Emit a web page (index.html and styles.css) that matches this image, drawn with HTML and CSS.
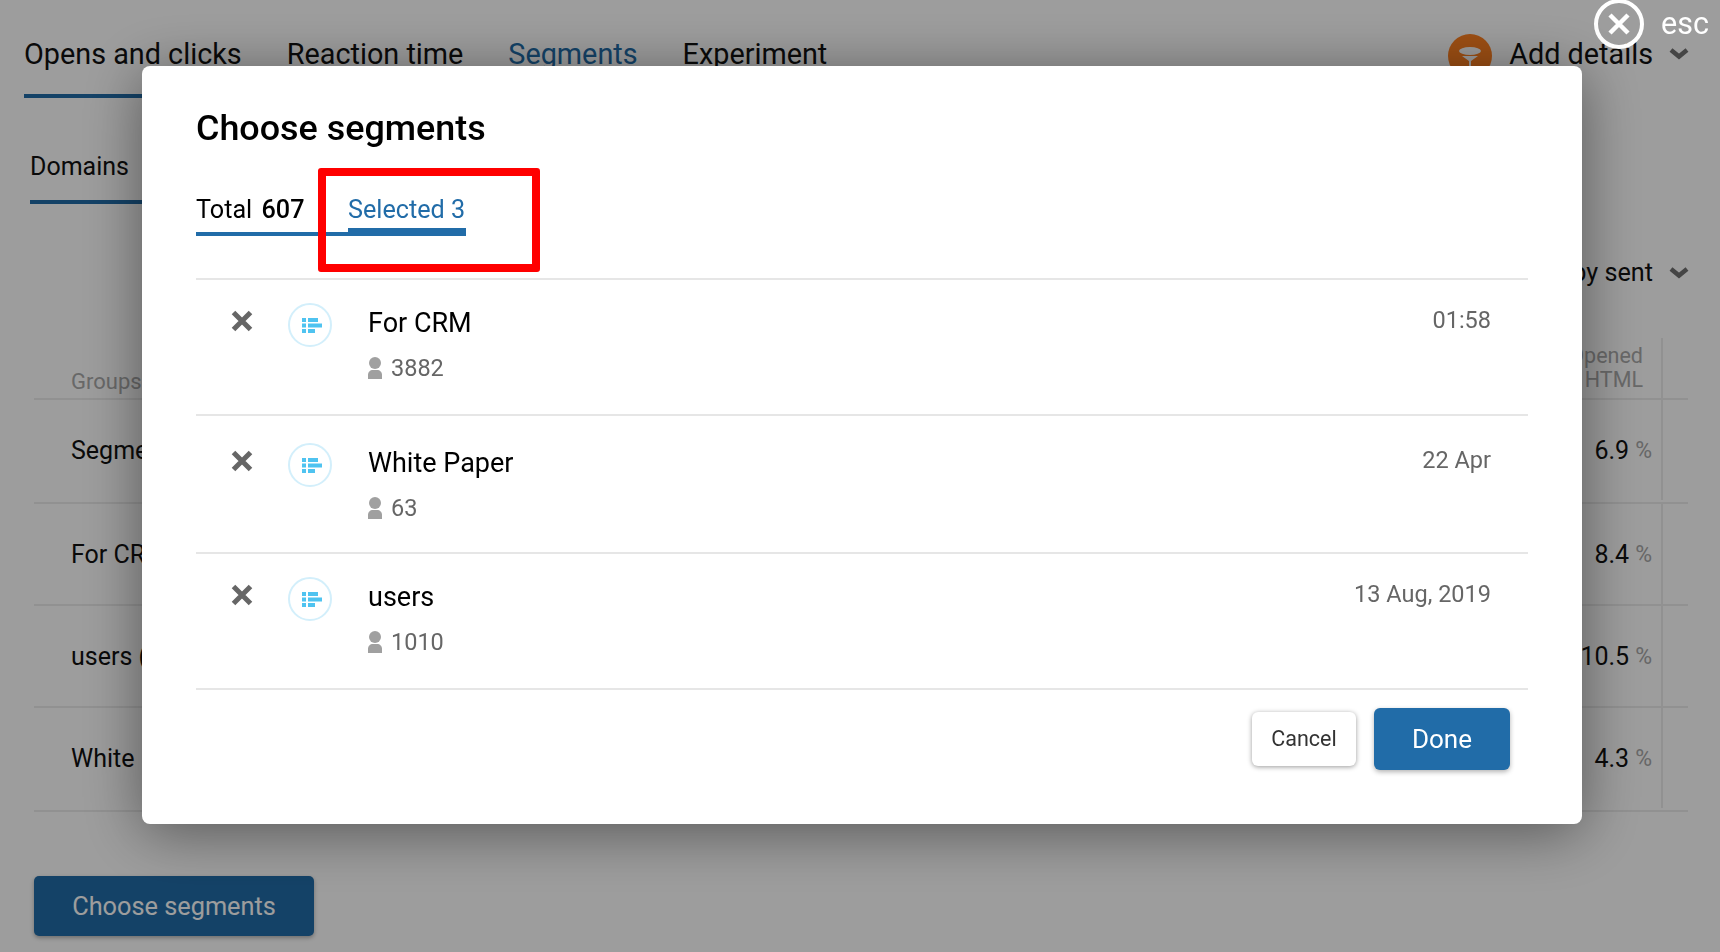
FILE: index.html
```html
<!DOCTYPE html>
<html lang="en">
<head>
<meta charset="utf-8">
<title>Choose segments</title>
<link rel="stylesheet" href="styles.css">
</head>
<body>
<div class="page">
  <header class="main-tabs">
    <a class="main-tab main-tab--on">Opens and clicks</a>
    <a class="main-tab">Reaction time</a>
    <a class="main-tab main-tab--blue">Segments</a>
    <a class="main-tab">Experiment</a>
    <div class="account">
      <span class="avatar">
        <svg width="24" height="26" viewBox="0 0 24 26"><ellipse cx="12" cy="4" rx="11" ry="4" fill="#fff"/><path d="M4 9h16l-7 5V26h-2V14z" fill="#fff"/></svg>
      </span>
      <span class="account-name">Add details</span>
      <svg class="chevron" width="20" height="12" viewBox="0 0 20 12"><path d="M2 2l8 6.500L18 2" fill="none" stroke="#707070" stroke-width="4.500"/></svg>
    </div>
  </header>
  <nav class="sub-tabs"><a class="sub-tab">Domains</a></nav>
  <div class="sort">
    <span>Sort by sent</span>
    <svg class="chevron" width="20" height="12" viewBox="0 0 20 12"><path d="M2 2l8 6.500L18 2" fill="none" stroke="#707070" stroke-width="4.500"/></svg>
  </div>
  <section class="table">
    <div class="tr tr--head">
      <div class="td-name">Groups</div>
      <div class="td-val td-val--head">Opened<br>HTML</div>
    </div>
    <div class="tr tr--a"><div class="td-name">Segments</div><div class="td-val">6.9 <small>%</small></div></div>
    <div class="tr tr--b"><div class="td-name">For CRM</div><div class="td-val">8.4 <small>%</small></div></div>
    <div class="tr tr--b"><div class="td-name">users (</div><div class="td-val">10.5 <small>%</small></div></div>
    <div class="tr tr--a"><div class="td-name">White Paper</div><div class="td-val">4.3 <small>%</small></div></div>
  </section>
  <button class="choose">Choose segments</button>
</div>

<div class="overlay">
  <div class="close">
    <span class="close-ring"><svg width="22" height="22" viewBox="0 0 22 22"><path d="M2 2l18 18M20 2 2 20" stroke="#fff" stroke-width="4.500" fill="none"/></svg></span>
    <span class="close-label">esc</span>
  </div>
  <div class="modal">
    <h1 class="modal-title">Choose segments</h1>
    <div class="seg-tabs">
      <a class="seg-tab">Total <b>607</b></a>
      <a class="seg-tab seg-tab--on">Selected 3</a>
    </div>
    <div class="row">
      <svg class="remove" width="22" height="22" viewBox="0 0 22 22"><path d="M2.500 2.500l17 17M19.500 2.500l-17 17" stroke="#666" stroke-width="5" fill="none"/></svg>
      <span class="seg-icon"><svg class="seg-glyph" width="20" height="15" viewBox="0 0 20 15"><path d="M0 0h4v4H0zM6 0h10v4H6zM0 5.500h4v4H0zM6 5.500h14v4H6zM0 11h4v4H0zM6 11h7v4H6z" fill="#4fc3f0"/></svg></span>
      <div class="seg-body">
        <div class="seg-name">For CRM</div>
        <div class="seg-count"><svg width="14" height="22" viewBox="0 0 14 22"><circle cx="7" cy="6" r="6" fill="#a0a0a0"/><path d="M0 22v-4c0-3 2-5 5-5h4c3 0 5 2 5 5v4z" fill="#a0a0a0"/></svg>3882</div>
      </div>
      <div class="seg-date">01:58</div>
    </div>
    <div class="row row--low">
      <svg class="remove" width="22" height="22" viewBox="0 0 22 22"><path d="M2.500 2.500l17 17M19.500 2.500l-17 17" stroke="#666" stroke-width="5" fill="none"/></svg>
      <span class="seg-icon"><svg class="seg-glyph" width="20" height="15" viewBox="0 0 20 15"><path d="M0 0h4v4H0zM6 0h10v4H6zM0 5.500h4v4H0zM6 5.500h14v4H6zM0 11h4v4H0zM6 11h7v4H6z" fill="#4fc3f0"/></svg></span>
      <div class="seg-body">
        <div class="seg-name">White Paper</div>
        <div class="seg-count"><svg width="14" height="22" viewBox="0 0 14 22"><circle cx="7" cy="6" r="6" fill="#a0a0a0"/><path d="M0 22v-4c0-3 2-5 5-5h4c3 0 5 2 5 5v4z" fill="#a0a0a0"/></svg>63</div>
      </div>
      <div class="seg-date">22 Apr</div>
    </div>
    <div class="row row--high">
      <svg class="remove" width="22" height="22" viewBox="0 0 22 22"><path d="M2.500 2.500l17 17M19.500 2.500l-17 17" stroke="#666" stroke-width="5" fill="none"/></svg>
      <span class="seg-icon"><svg class="seg-glyph" width="20" height="15" viewBox="0 0 20 15"><path d="M0 0h4v4H0zM6 0h10v4H6zM0 5.500h4v4H0zM6 5.500h14v4H6zM0 11h4v4H0zM6 11h7v4H6z" fill="#4fc3f0"/></svg></span>
      <div class="seg-body">
        <div class="seg-name">users</div>
        <div class="seg-count"><svg width="14" height="22" viewBox="0 0 14 22"><circle cx="7" cy="6" r="6" fill="#a0a0a0"/><path d="M0 22v-4c0-3 2-5 5-5h4c3 0 5 2 5 5v4z" fill="#a0a0a0"/></svg>1010</div>
      </div>
      <div class="seg-date">13 Aug, 2019</div>
    </div>
    <footer class="modal-foot">
      <button class="btn btn--cancel">Cancel</button>
      <button class="btn btn--done">Done</button>
    </footer>
    <div class="callout"></div>
  </div>
</div>
</body>
</html>
```

FILE: styles.css
```css
* { box-sizing: border-box; }
html, body { margin: 0; height: 100%; overflow: hidden; }
body { background: #fff; color: #111; font-family: Roboto, "Liberation Sans", sans-serif; }

.page { height: 952px; }

.main-tabs { display: flex; gap: 45px; padding: 38px 31px 0 24px; font-size: 28.800px; line-height: 32px; }
.main-tab { display: block; height: 60px; }
.main-tab--on { border-bottom: 4px solid #216ca8; }
.main-tab--blue { color: #216ca8; }
.account { margin-left: auto; display: flex; align-items: center; height: 32px; }
.avatar { width: 44px; height: 44px; margin-top: 4px; border-radius: 50%; background: #ff8020; display: flex; justify-content: center; padding-top: 13px; }
.account-name { margin-left: 17px; }
.chevron { display: block; margin-left: 16px; }

.sub-tabs { padding: 54px 0 0 30px; font-size: 25px; line-height: 30px; }
.sub-tab { display: block; width: 300px; height: 52px; border-bottom: 4px solid #216ca8; }

.sort { display: flex; align-items: center; justify-content: flex-end; margin-top: 54px; padding-right: 31px; font-size: 25.200px; line-height: 30px; }

.table { margin: 50px 32px 0 34px; font-size: 25px; }
.tr { display: flex; border-bottom: 2px solid #ececec; }
.tr--head { height: 62px; color: #aaa; font-size: 22px; }
.tr--a { height: 104px; padding-bottom: 2px; }
.tr--b { height: 102px; }
.td-name { flex: 1; padding-left: 37px; display: flex; align-items: center; }
.tr--head .td-name { align-items: flex-end; padding-bottom: 4px; }
.td-val { width: 200px; margin-right: 25px; padding-right: 9px; border-right: 2px solid #ececec; display: flex; align-items: center; justify-content: flex-end; gap: 6px; }
.td-val small { font-size: 23px; color: #a8a8a8; }
.td-val--head { display: block; padding: 6px 18px 0 0; font-size: 21.500px; text-align: right; line-height: 24px; }

.choose { display: block; margin: 64px 0 0 34px; width: 280px; height: 60px; border: 0; border-radius: 5px; background: #216ca8; color: #fff; font: 25.300px Roboto, sans-serif; box-shadow: 0 2px 4px rgba(0,0,0,.3); }

.overlay { position: fixed; inset: 0; background: rgba(0,0,0,.385); display: flex; align-items: flex-start; justify-content: center; padding: 66px 0 0 4px; }

.close { position: absolute; top: -1px; left: 1594px; display: flex; align-items: center; gap: 17px; color: #fff; font-size: 30.500px; }
.close-ring { width: 50px; height: 50px; border: 4px solid #fff; border-radius: 50%; display: flex; align-items: center; justify-content: center; }
.close-label { margin-bottom: 2px; }

.modal { position: relative; width: 1440px; padding: 42px 54px 54px; background: #fff; border-radius: 8px; box-shadow: 0 8px 60px rgba(0,0,0,.45); }
.modal-title { margin: 0; font-size: 35.900px; line-height: 40px; font-weight: 500; color: #000; }

.seg-tabs { display: flex; margin: 47px 0 42px; font-size: 25.200px; line-height: 30px; }
.seg-tab { display: block; width: 152px; padding-bottom: 7px; border-bottom: 4px solid #216ca8; color: #000; }
.seg-tab b { font-weight: 500; margin-left: 3px; }
.seg-tab--on { width: 118px; padding-bottom: 3px; border-bottom-width: 8px; color: #216ca8; }

.row { display: grid; grid-template-columns: 92px 80px 1fr auto; align-items: start; height: 136px; padding: 23px 37px 0 0; border-top: 2px solid #e6e6e6; }
.row--low { height: 138px; padding-top: 27px; }
.row--high { height: 136px; padding-top: 23px; }
.remove { margin: 7px 0 0 35px; }
.seg-icon { width: 44px; height: 44px; border: 2px solid #d3effb; border-radius: 50%; display: flex; align-items: center; justify-content: center; }
.seg-glyph { margin-left: 4px; }
.seg-body { margin-top: 5px; }
.seg-name { font-size: 27px; line-height: 30px; color: #000; }
.seg-count { display: flex; align-items: center; gap: 9px; margin-top: 15px; font-size: 23.500px; line-height: 30px; color: #666; }
.seg-date { margin-top: 2px; font-size: 23.500px; line-height: 30px; color: #666; }

.modal-foot { display: flex; align-items: center; justify-content: flex-end; gap: 18px; padding: 18px 18px 0 0; border-top: 2px solid #e6e6e6; }
.btn { border: 0; border-radius: 6px; font-family: Roboto, sans-serif; }
.btn--cancel { width: 104px; height: 54px; padding-bottom: 2px; background: #fff; color: #333; font-size: 21.500px; box-shadow: 0 1px 5px rgba(0,0,0,.4); }
.btn--done { width: 136px; height: 62px; padding-bottom: 2px; background: #216ca8; color: #fff; font-size: 26px; box-shadow: 0 2px 5px rgba(0,0,0,.3); }

.callout { position: absolute; left: 176px; top: 102px; width: 222px; height: 104px; border: 8px solid #f00; border-radius: 3px; }
```
